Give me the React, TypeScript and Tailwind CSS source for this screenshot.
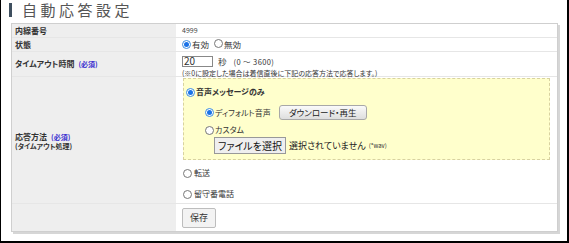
import React from "react"

const jp = "font-['Noto_Sans_CJK_JP','Noto_Sans',sans-serif] [font-feature-settings:'palt']"

function Radio({ checked }: { checked?: boolean }) {
  if (checked) {
    return (
      <span className="inline-flex h-[9px] w-[9px] shrink-0 items-center justify-center rounded-full border border-[#3b8de0] bg-white">
        <span className="h-[5px] w-[5px] rounded-full bg-[#1a73e8]" />
      </span>
    )
  }
  return <span className="inline-block h-[9px] w-[9px] shrink-0 rounded-full border border-[#777] bg-white" />
}

function Req() {
  return <span className="ml-[4px] text-[7px] font-bold text-[#3a2fd0]">(必須)</span>
}

export default function App() {
  return (
    <div className={`h-[243px] w-[569px] overflow-hidden border-b-2 border-l border-r-2 border-black bg-white text-[#333] ${jp}`}>
      {/* 見出し */}
      <div className="flex h-[23px] items-start pl-[8px] pt-[3px]">
        <span className="h-[14px] w-[3px] bg-[#3e4f5f]" />
        <span className="ml-[10px] -mt-[3px] text-[15px] leading-[20px] tracking-[3.5px] text-[#555]">自動応答設定</span>
      </div>

      <div className="ml-[10px] w-[547px] border border-[#cfcfcf] shadow-[2px_2px_0_#d6d6d6]">
        {/* 内線番号 */}
        <div className="flex h-[14px] border-b border-[#e6e6e6]">
          <div className="flex w-[164px] items-center bg-[#eeeeee] pl-[3px] text-[8px] font-bold">内線番号</div>
          <div className="flex flex-1 items-center pl-[6px] text-[7px] text-[#444]">4999</div>
        </div>
        {/* 状態 */}
        <div className="flex h-[14px] border-b border-[#e6e6e6]">
          <div className="flex w-[164px] items-center bg-[#eeeeee] pl-[3px] text-[8px] font-bold">状態</div>
          <div className="flex flex-1 items-center pl-[6px] text-[8.5px]">
            <Radio checked />
            <span className="ml-[1px]">有効</span>
            <span className="ml-[5px]"><Radio /></span>
            <span className="ml-[1px]">無効</span>
          </div>
        </div>
        {/* タイムアウト時間 */}
        <div className="flex h-[25px] border-b border-[#e6e6e6]">
          <div className="flex w-[164px] items-center bg-[#eeeeee] pl-[3px] text-[8px] font-bold">
            タイムアウト時間<Req />
          </div>
          <div className="flex flex-1 flex-col pl-[6px] pt-[3px]">
            <div className="flex items-center text-[8.5px]">
              <span className="flex h-[11px] w-[31px] items-center border border-[#888] pl-[1px] text-[10px] leading-none">20</span>
              <span className="ml-[5px]">秒</span>
              <span className="ml-[7px] text-[7.5px] tracking-[0.4px]">(0 ～ 3600)</span>
            </div>
            <div className="mt-[1px] text-[7px] leading-[8px]">(※0に設定した場合は着信直後に下記の応答方法で応答します。)</div>
          </div>
        </div>
        {/* 応答方法 */}
        <div className="flex h-[127px] border-b border-[#e6e6e6]">
          <div className="flex w-[164px] flex-col justify-center bg-[#eeeeee] pl-[3px] pt-[2px] text-[8px] font-bold leading-[9px]">
            <div>
              応答方法<Req />
            </div>
            <div className="text-[7px]">(タイムアウト処理)</div>
          </div>
          <div className="flex flex-1 flex-col pl-[7px] pr-[7px] pt-[1px]">
            <div className="h-[82px] border border-dashed border-[#d8d2a0] bg-[#ffffcc] pl-[2px] pt-[7px]">
              <div className="flex items-center text-[8px] font-bold">
                <Radio checked />
                <span className="ml-[1px]">音声メッセージのみ</span>
              </div>
              <div className="ml-[19px] mt-[7px] flex items-center text-[8px]">
                <Radio checked />
                <span className="ml-[1px]">ディフォルト音声</span>
                <button className="ml-[8px] h-[15px] w-[88px] rounded-[3px] border border-[#a8a8a8] bg-gradient-to-b from-[#fafafa] to-[#dedede] text-[8.5px] text-[#222]">
                  ダウンロード・再生
                </button>
              </div>
              <div className="ml-[19px] mt-[4px] flex items-center text-[8px]">
                <Radio />
                <span className="ml-[1px]">カスタム</span>
              </div>
              <div className="ml-[28px] mt-[1px] flex items-center">
                <button className="h-[17px] w-[72px] border border-[#999] bg-[#efefef] text-[10px] text-[#111]">ファイルを選択</button>
                <span className="ml-[3px] text-[9px] text-[#222]">選択されていません</span>
                <span className="ml-[3px] text-[6px]">(*wav)</span>
              </div>
            </div>
            <div className="mt-[7px] flex items-center text-[8px]">
              <Radio />
              <span className="ml-[2px]">転送</span>
            </div>
            <div className="mt-[9px] flex items-center text-[8px]">
              <Radio />
              <span className="ml-[2px]">留守番電話</span>
            </div>
          </div>
        </div>
        {/* 保存 */}
        <div className="flex h-[27px]">
          <div className="w-[164px] bg-[#eeeeee]" />
          <div className="flex flex-1 items-center pl-[6px]">
            <button className="h-[20px] w-[34px] rounded-[2px] border border-[#bdbdbd] bg-[#f3f3f3] text-[9px] text-[#333]">保存</button>
          </div>
        </div>
      </div>
    </div>
  )
}
